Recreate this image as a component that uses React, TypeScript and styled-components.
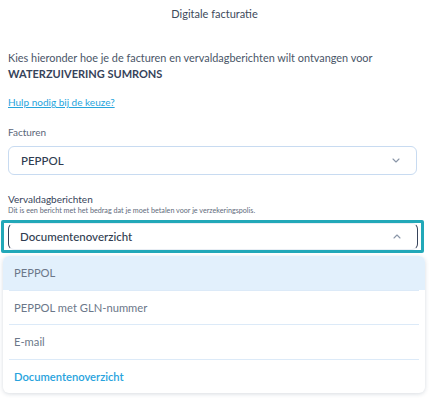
import React from 'react';
import styled, { createGlobalStyle } from 'styled-components';

const GlobalStyle = createGlobalStyle`
  html, body {
    margin: 0;
    padding: 0;
    background: #ffffff;
  }
  body {
    font-family: 'Lato', 'Open Sans', sans-serif;
    color: #3d4a5c;
  }
`;

const Page = styled.div`
  width: 433px;
  height: 400px;
  box-sizing: border-box;
  padding: 0 16px 0 8px;
  display: flex;
  flex-direction: column;
  overflow: hidden;
`;

const Header = styled.div`
  height: 26px;
  display: flex;
  align-items: center;
  justify-content: center;
  font-size: 11px;
  color: #3d4a5c;
  margin-left: 4px;
`;

const Intro = styled.p`
  margin: 24px 0 0;
  font-size: 10.9px;
  line-height: 16px;
  color: #4a5668;
`;

const Company = styled.strong`
  display: block;
  font-weight: 700;
  color: #36435a;
  font-size: 11px;
`;

const HelpLink = styled.a`
  margin-top: 13px;
  font-size: 10px;
  line-height: 14px;
  color: #26a4dc;
  text-decoration: underline;
  align-self: flex-start;
`;

const Label = styled.label<{ $gap: number; $strong?: boolean }>`
  margin-top: ${({ $gap }) => $gap}px;
  font-size: 10px;
  line-height: 14px;
  color: ${({ $strong }) => ($strong ? '#36435a' : '#5a6678')};
`;

const Hint = styled.div`
  font-size: 7.2px;
  line-height: 10px;
  color: #5f6b7c;
`;

const Select = styled.div<{ $open?: boolean }>`
  box-sizing: border-box;
  height: ${({ $open }) => ($open ? '27px' : '29px')};
  display: flex;
  align-items: center;
  justify-content: space-between;
  padding: 0 16px 0 12px;
  border: 1px solid ${({ $open }) => ($open ? '#36435a' : '#c8dbf1')};
  border-top-color: ${({ $open }) => ($open ? '#e9eef4' : '#c8dbf1')};
  border-bottom-color: ${({ $open }) => ($open ? '#e9eef4' : '#c8dbf1')};
  border-radius: 6px;
  background: #fff;
  font-size: 11.5px;
  font-weight: 500;
  color: #2f3c50;
  margin-top: 7px;
`;

const FocusRing = styled.div`
  position: relative;
  margin: 4px -7px 0 -7px;
  padding: 0 3px 0 4px;
  border: 3px solid #22a8b8;
  border-radius: 2px;

  ${Select} {
    margin-top: 0;
    padding-left: 11px;
    padding-right: 16px;
  }
`;

const Menu = styled.ul`
  position: absolute;
  top: calc(100% + 6px);
  left: -1px;
  right: -4px;
  margin: 0;
  padding: 0;
  list-style: none;
  background: #fff;
  border-radius: 6px;
  box-shadow: 0 1px 4px rgba(40, 60, 90, 0.18);
  overflow: hidden;
`;

const Option = styled.li<{ $active?: boolean; $selected?: boolean }>`
  position: relative;
  height: 33.6px;
  display: flex;
  align-items: center;
  padding: 0 11px;
  font-size: 11.2px;
  background: ${({ $active }) => ($active ? '#e2f0fc' : '#fff')};
  color: ${({ $selected }) => ($selected ? '#28a3dd' : '#6b7789')};
  font-weight: ${({ $selected }) => ($selected ? 600 : 400)};

  & + & {
    border-top: 1px solid #dceaf8;
    margin: 0 6px;
    padding: 0 5px;
  }
`;

const Chevron = ({ up }: { up?: boolean }) => (
  <svg width="8" height="5" viewBox="0 0 8 5" fill="none">
    <path
      d={up ? 'M1 4L4 1L7 4' : 'M1 1L4 4L7 1'}
      stroke="#8a96a8"
      strokeWidth="1.1"
      strokeLinecap="round"
      strokeLinejoin="round"
    />
  </svg>
);

const options = ['PEPPOL', 'PEPPOL met GLN-nummer', 'E-mail', 'Documentenoverzicht'];

export default function App() {
  return (
    <>
      <GlobalStyle />
      <Page>
        <Header>Digitale facturatie</Header>
        <Intro>
          Kies hieronder hoe je de facturen en vervaldagberichten wilt ontvangen voor
          <Company>WATERZUIVERING SUMRONS</Company>
        </Intro>
        <HelpLink href="#">Hulp nodig bij de keuze?</HelpLink>

        <Label $gap={16}>Facturen</Label>
        <Select>
          PEPPOL
          <Chevron />
        </Select>

        <Label $gap={17} $strong>Vervaldagberichten</Label>
        <Hint>Dit is een bericht met het bedrag dat je moet betalen voor je verzekeringspolis.</Hint>
        <FocusRing>
          <Select $open>
            Documentenoverzicht
            <Chevron up />
          </Select>
          <Menu>
            {options.map((o, i) => (
              <Option key={o} $active={i === 0} $selected={i === options.length - 1}>
                {o}
              </Option>
            ))}
          </Menu>
        </FocusRing>
      </Page>
    </>
  );
}
